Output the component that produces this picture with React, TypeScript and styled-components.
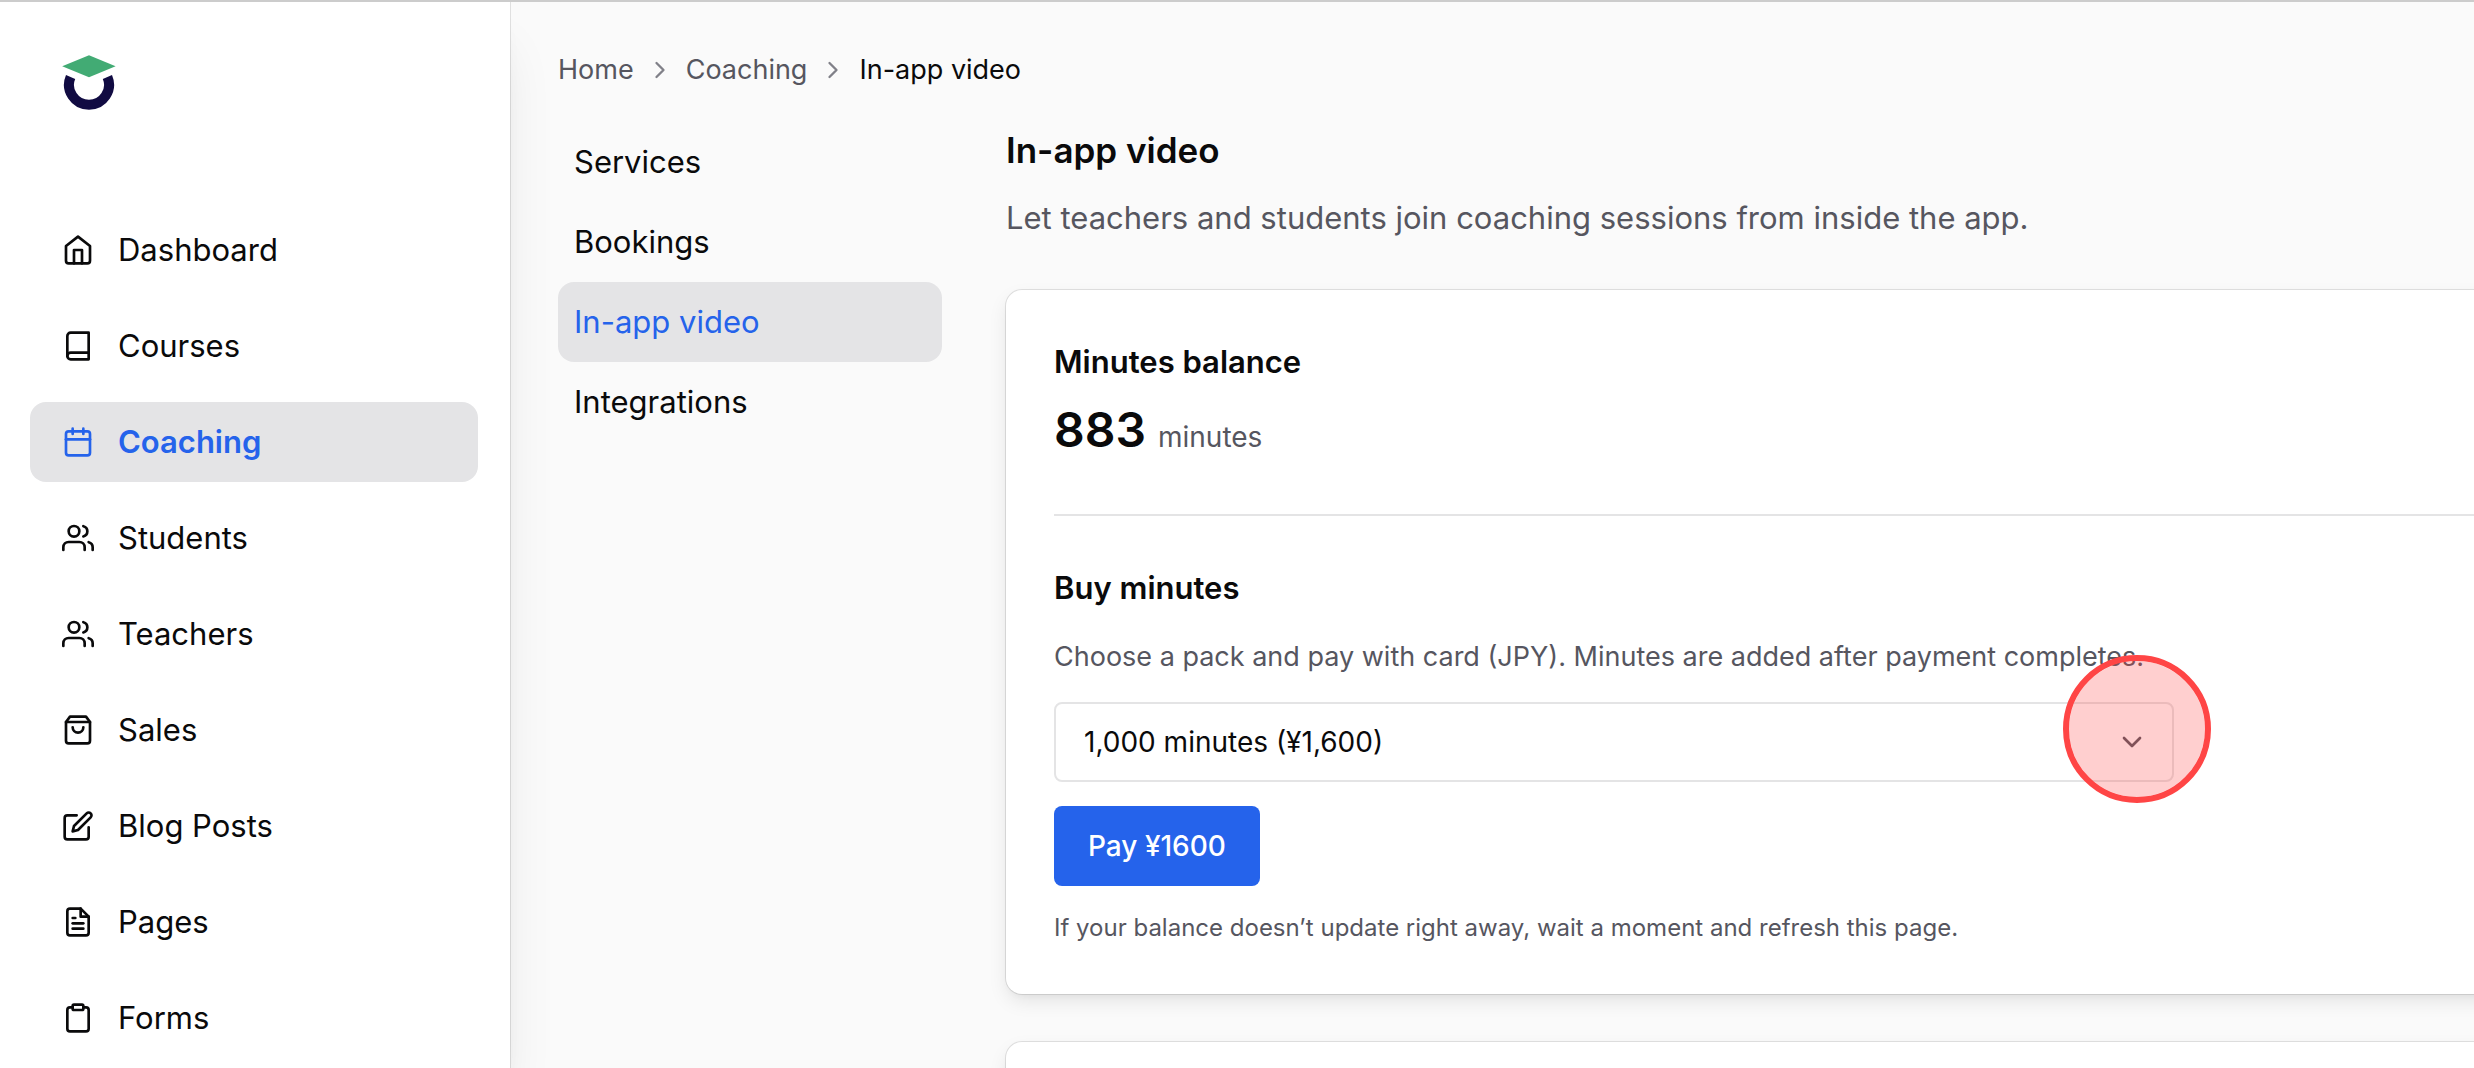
import React from "react";
import styled, { createGlobalStyle } from "styled-components";
import type { IconType } from "react-icons";
import {
  FiBook,
  FiCalendar,
  FiChevronDown,
  FiChevronRight,
  FiClipboard,
  FiEdit,
  FiFileText,
  FiHome,
  FiShoppingBag,
  FiUsers,
} from "react-icons/fi";

const color = {
  ink: "#0a0a0b",
  muted: "#56565f",
  faint: "#808088",
  line: "#e4e4e5",
  ring: "rgba(0, 0, 0, 0.1)",
  active: "#e4e4e6",
  primary: "#2563eb",
  page: "#fafafa",
  surface: "#ffffff",
  marker: "#ff4545",
};

const GlobalStyle = createGlobalStyle`
  *, *::before, *::after { box-sizing: border-box; }
  body {
    margin: 0;
    background: ${color.page};
    color: ${color.ink};
    font-family: Inter, "Liberation Sans", sans-serif;
    font-size: 31px;
    line-height: 48px;
    -webkit-font-smoothing: antialiased;
  }
  h1, h2, p, ul, ol { margin: 0; padding: 0; }
  ul, ol { list-style: none; }
  a { color: inherit; text-decoration: none; }
`;

const Shell = styled.div`
  display: flex;
  height: 100vh;
  overflow: hidden;
  border-top: 2px solid #cccccc;
`;

const Sidebar = styled.aside`
  flex: 0 0 510px;
  padding: 48px 32px 0 30px;
  background: ${color.surface};
  box-shadow:
    0 0 0 1px ${color.ring},
    0 40px 50px -10px rgba(0, 0, 0, 0.1),
    0 16px 20px -12px rgba(0, 0, 0, 0.1);
`;

const LogoLink = styled.a`
  display: block;
  height: 64px;
  margin-bottom: 96px;
  padding-left: 32px;

  svg {
    display: block;
  }
`;

const NavList = styled.ul`
  display: grid;
  gap: 16px;
`;

const NavLink = styled.a<{ $active?: boolean }>`
  display: flex;
  align-items: center;
  gap: 24px;
  height: 80px;
  padding: 0 32px;
  border-radius: 16px;
  background: ${(p) => (p.$active ? color.active : "transparent")};
  color: ${(p) => (p.$active ? color.primary : color.ink)};
  font-weight: ${(p) => (p.$active ? 600 : 400)};

  svg {
    flex: none;
    width: 32px;
    height: 32px;
  }
`;

const Main = styled.main`
  flex: 1;
  min-width: 0;
  padding: 48px 0 0 48px;
`;

const Crumbs = styled.ol`
  display: flex;
  align-items: center;
  gap: 12px;
  margin-bottom: 32px;
  color: ${color.muted};
  font-size: 27px;
  line-height: 40px;

  li {
    display: flex;
    align-items: center;
    gap: 12px;
  }

  svg {
    width: 28px;
    height: 28px;
    color: ${color.faint};
  }
`;

const CurrentCrumb = styled.span`
  color: ${color.ink};
`;

const Columns = styled.div`
  display: grid;
  grid-template-columns: 384px minmax(0, 1fr);
  gap: 64px;
`;

const SubLink = styled.a<{ $active?: boolean }>`
  display: flex;
  align-items: center;
  height: 80px;
  padding: 0 16px;
  border-radius: 16px;
  background: ${(p) => (p.$active ? color.active : "transparent")};
  color: ${(p) => (p.$active ? color.primary : color.ink)};
`;

const PageHeader = styled.header`
  display: grid;
  gap: 16px;
  margin-bottom: 48px;
`;

const PageTitle = styled.h1`
  font-size: 35px;
  font-weight: 600;
  line-height: 56px;
`;

const Lead = styled.p`
  color: ${color.muted};
`;

/* The cards run on past the right edge of the window. */
const Cards = styled.div`
  display: grid;
  gap: 48px;
  margin-right: -48px;
`;

const Card = styled.section`
  min-height: 320px;
  padding: 48px;
  border-radius: 16px;
  background: ${color.surface};
  box-shadow:
    0 0 0 1px ${color.ring},
    0 8px 20px -2px rgba(0, 0, 0, 0.1),
    0 4px 8px -4px rgba(0, 0, 0, 0.06);
`;

const CardTitle = styled.h2`
  font-size: 31px;
  font-weight: 600;
  line-height: 48px;
`;

const Balance = styled.p`
  display: flex;
  align-items: baseline;
  gap: 12px;
  margin-top: 8px;
  padding-bottom: 48px;
  border-bottom: 2px solid ${color.line};
  line-height: 72px;
`;

const BalanceValue = styled.span`
  font-size: 48px;
  font-weight: 600;
`;

const BalanceUnit = styled.span`
  color: ${color.muted};
  font-size: 28px;
  line-height: 40px;
`;

const BuyForm = styled.form`
  display: grid;
  justify-items: start;
  gap: 24px;
  padding-top: 48px;
`;

const Hint = styled.label`
  color: ${color.muted};
  font-size: 27px;
  line-height: 42px;
`;

const SelectBox = styled.div`
  position: relative;
  width: 100%;
  max-width: 1120px;

  > svg {
    position: absolute;
    top: 24px;
    right: 26px;
    width: 32px;
    height: 32px;
    color: ${color.muted};
    pointer-events: none;
  }
`;

const PackSelect = styled.select`
  display: block;
  width: 100%;
  height: 80px;
  padding: 0 80px 0 28px;
  border: 2px solid ${color.line};
  border-radius: 8px;
  appearance: none;
  background: ${color.surface};
  color: ${color.ink};
  font: inherit;
  font-size: 28px;
`;

const ClickMarker = styled.span`
  position: absolute;
  top: -47px;
  right: -37px;
  width: 148px;
  height: 148px;
  border: 6px solid ${color.marker};
  border-radius: 50%;
  background: rgba(255, 69, 69, 0.26);
  background-clip: padding-box;
  pointer-events: none;
`;

const PayButton = styled.button`
  height: 80px;
  padding: 0 34px;
  border: 0;
  border-radius: 8px;
  background: ${color.primary};
  color: ${color.surface};
  font: inherit;
  font-size: 28px;
  font-weight: 500;
`;

const Note = styled.p`
  color: ${color.muted};
  font-size: 24px;
  line-height: 36px;
`;

type NavItem = { label: string; icon: IconType; active?: boolean };

const navItems: NavItem[] = [
  { label: "Dashboard", icon: FiHome },
  { label: "Courses", icon: FiBook },
  { label: "Coaching", icon: FiCalendar, active: true },
  { label: "Students", icon: FiUsers },
  { label: "Teachers", icon: FiUsers },
  { label: "Sales", icon: FiShoppingBag },
  { label: "Blog Posts", icon: FiEdit },
  { label: "Pages", icon: FiFileText },
  { label: "Forms", icon: FiClipboard },
];

const subItems = [
  { label: "Services" },
  { label: "Bookings" },
  { label: "In-app video", active: true },
  { label: "Integrations" },
];

function Logo() {
  return (
    <svg width="54" height="64" viewBox="0 0 54 64" aria-hidden="true">
      <path d="M27 5.2 53.6 16.3 27 27.2.2 16.3Z" fill="#42ab74" />
      <path
        d="M8.6 27a20 20 0 1 0 36.8 0"
        fill="none"
        stroke="#110b42"
        strokeWidth="10"
      />
    </svg>
  );
}

export default function App() {
  return (
    <>
      <GlobalStyle />
      <Shell>
        <Sidebar>
          <LogoLink href="#" aria-label="Home">
            <Logo />
          </LogoLink>
          <nav>
            <NavList>
              {navItems.map(({ label, icon: Icon, active }) => (
                <li key={label}>
                  <NavLink href="#" $active={active}>
                    <Icon aria-hidden="true" />
                    {label}
                  </NavLink>
                </li>
              ))}
            </NavList>
          </nav>
        </Sidebar>

        <Main>
          <nav aria-label="Breadcrumb">
            <Crumbs>
              <li>
                <a href="#">Home</a>
              </li>
              <li>
                <FiChevronRight aria-hidden="true" />
                <a href="#">Coaching</a>
              </li>
              <li>
                <FiChevronRight aria-hidden="true" />
                <CurrentCrumb aria-current="page">In-app video</CurrentCrumb>
              </li>
            </Crumbs>
          </nav>

          <Columns>
            <nav aria-label="Coaching">
              <ul>
                {subItems.map(({ label, active }) => (
                  <li key={label}>
                    <SubLink href="#" $active={active}>
                      {label}
                    </SubLink>
                  </li>
                ))}
              </ul>
            </nav>

            <div>
              <PageHeader>
                <PageTitle>In-app video</PageTitle>
                <Lead>
                  Let teachers and students join coaching sessions from inside
                  the app.
                </Lead>
              </PageHeader>

              <Cards>
                <Card>
                  <CardTitle>Minutes balance</CardTitle>
                  <Balance>
                    <BalanceValue>883</BalanceValue>
                    <BalanceUnit>minutes</BalanceUnit>
                  </Balance>
                  <BuyForm onSubmit={(e) => e.preventDefault()}>
                    <CardTitle>Buy minutes</CardTitle>
                    <Hint htmlFor="pack">
                      Choose a pack and pay with card (JPY). Minutes are added
                      after payment completes.
                    </Hint>
                    <SelectBox>
                      <PackSelect id="pack" defaultValue="1000">
                        <option value="1000">1,000 minutes (¥1,600)</option>
                      </PackSelect>
                      <FiChevronDown aria-hidden="true" />
                      <ClickMarker />
                    </SelectBox>
                    <PayButton type="submit">Pay ¥1600</PayButton>
                    <Note>
                      If your balance doesn’t update right away, wait a moment
                      and refresh this page.
                    </Note>
                  </BuyForm>
                </Card>
                <Card />
              </Cards>
            </div>
          </Columns>
        </Main>
      </Shell>
    </>
  );
}
